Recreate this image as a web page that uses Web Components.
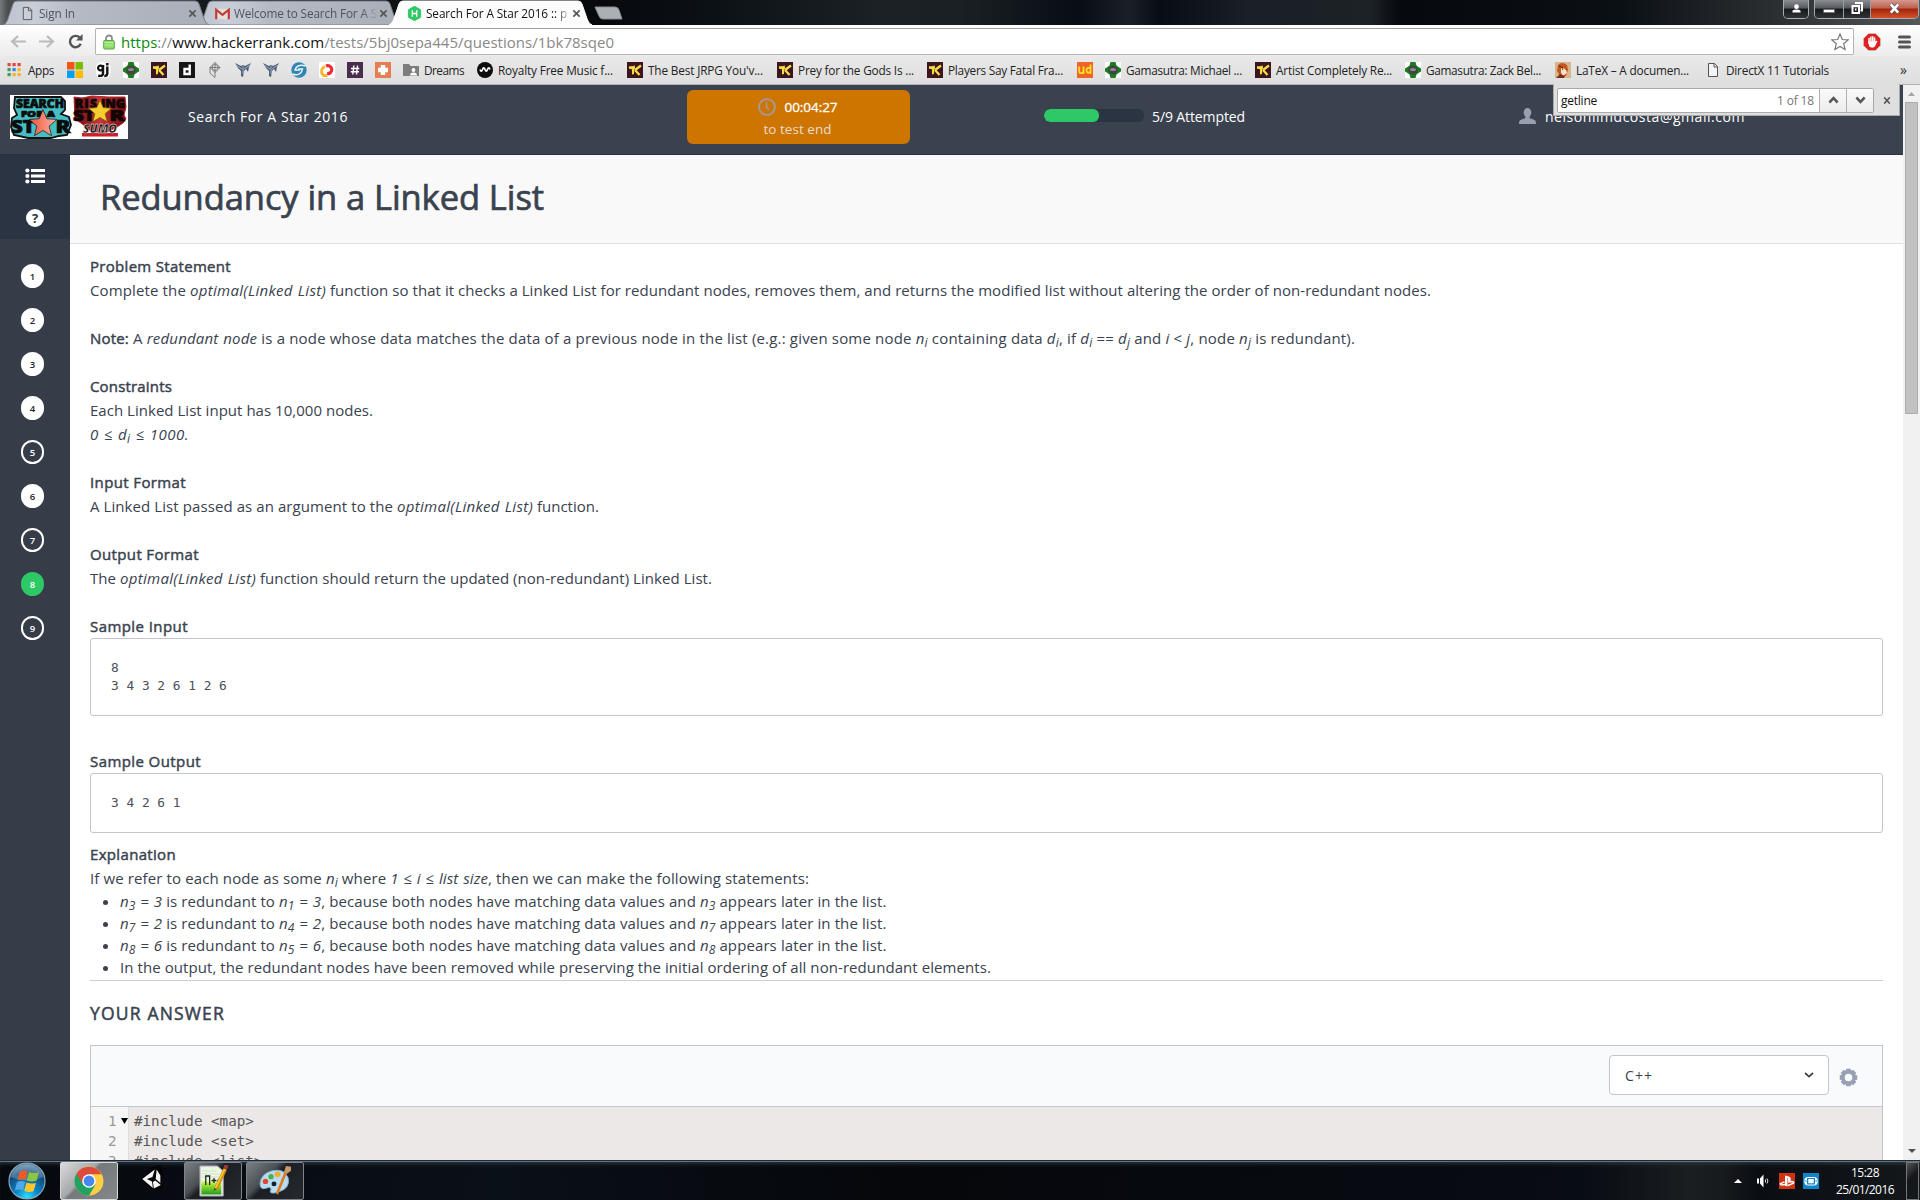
<!DOCTYPE html>
<html lang="en">
<head>
<meta charset="utf-8">
<title>Search For A Star 2016</title>
<style>
html,body{margin:0;height:1200px;overflow:hidden;background:#fff}
body{font-family:"Open Sans","Noto Sans",sans-serif;color:#39424e}
</style>
</head>
<body>
<desktop-screen></desktop-screen>
<script>
const base = '*{box-sizing:border-box}';
function define(name, css, html, after) {
  customElements.define(name, class extends HTMLElement {
    constructor() {
      super();
      const r = this.attachShadow({mode: 'open'});
      r.innerHTML = '<style>' + base + css + '</style>' + (typeof html === 'function' ? html(this) : html);
      if (after) after(this, r);
    }
  });
}
const t = (w, s) => `<fit-text w="${w}">${s}</fit-text>`;

const star = (c, r) => { let p = ''; for (let i = 0; i < 10; i++) { const a = -Math.PI / 2 + i * Math.PI / 5, q = i % 2 ? r * .45 : r; p += (c[0] + q * Math.cos(a)).toFixed(1) + ',' + (c[1] + q * Math.sin(a)).toFixed(1) + ' '; } return p; };

const icons = {
  page: ['0 0 16 16', '<path d="M3.5 1.5h6l3 3v10h-9z" fill="#f4f4f4" stroke="#555"/><path d="M9 1.5v3.5h3.5" fill="none" stroke="#555"/>'],
  pagetab: ['0 0 16 16', '<path d="M3.5 1.5h6l3 3v10h-9z" fill="#c9ced8" stroke="#555"/><path d="M9 1.5v3.5h3.5" fill="none" stroke="#555"/>'],
  gmail: ['0 0 16 16', '<path d="M1.500 3h13v11h-13z" fill="#e0e0e0"/><path d="M1.300 14V4L8 9.500 14.700 4v10" fill="none" stroke="#c33a2e" stroke-width="2.300"/>'],
  hr: ['0 0 16 16', '<path d="M8 .3l6.500 3.700v8L8 15.700 1.500 12V4z" fill="#2ec866" stroke="#2ec866"/><path d="M5.700 4.500v7M10.300 4.500v7M5.700 8h4.600" stroke="#fff" stroke-width="1.500"/>'],
  x: ['0 0 10 10', '<path d="M1.500 1.500l7 7M8.500 1.500l-7 7" stroke="#555" stroke-width="1.800"/>'],
  back: ['0 0 16 14', '<path d="M8 1L2 7l6 6M2.500 7H16" fill="none" stroke="#bbb" stroke-width="2.200"/>'],
  fwd: ['0 0 16 14', '<path d="M8 1l6 6-6 6M13.500 7H0" fill="none" stroke="#bbb" stroke-width="2.200"/>'],
  reload: ['0 0 16 16', '<path d="M13 4.500A6 6 0 1 0 13.600 10.500" fill="none" stroke="#555" stroke-width="2.600"/><path d="M15.500 0v7h-7z" fill="#555"/>'],
  lock: ['0 0 12 16', '<path d="M3 7V4.500a3 3 0 0 1 6 0V7" fill="none" stroke="#8d8d8d" stroke-width="1.800"/><rect x=".7" y="6.500" width="10.600" height="8.500" rx="1" fill="#8fdc6b" stroke="#58a83c"/><path d="M1.500 8.500h9M1.500 11h9" stroke="#b9efa0"/>'],
  star: ['0 0 18 18', `<polygon points="${star([9, 9.6], 8.6)}" fill="#fff" stroke="#777" stroke-width="1.200"/>`],
  stop: ['0 0 18 18', '<path d="M5.500.5h7l5 5v7l-5 5h-7l-5-5v-7z" fill="#e01f1f" stroke="#c9c9c9" stroke-width=".7"/><path d="M6 10V5.500M7.900 9V4M9.800 9V3.700M11.600 9V5" stroke="#fff" stroke-width="1.500" stroke-linecap="round"/><path d="M5.300 8.500h7l1.500-1 .5 1-2.200 4.500c-1 2-4.500 2-6 0z" fill="#fff"/>'],
  menu: ['0 0 13 14', '<path d="M1.500 2h10M1.500 7h10M1.500 12h10" stroke="#555" stroke-width="3" stroke-linecap="round"/>'],
  apps: ['0 0 16 16', [[1,1,'#e8453c'],[6,1,'#e8453c'],[11,1,'#e8453c'],[1,6,'#3f9e5a'],[6,6,'#3b83f0'],[11,6,'#f3b42a'],[1,11,'#3f9e5a'],[6,11,'#f3b42a'],[11,11,'#f3b42a']].map(a => `<rect x="${a[0] - .5}" y="${a[1]}" width="3.200" height="3.200" fill="${a[2]}"/>`).join('')],
  ms: ['0 0 16 16', '<path d="M0 0h7.500v7.500H0z" fill="#f65314"/><path d="M8.500 0H16v7.500H8.500z" fill="#7cbb00"/><path d="M0 8.500h7.500V16H0z" fill="#00a1f1"/><path d="M8.500 8.500H16V16H8.500z" fill="#ffbb00"/>'],
  gj: ['0 0 16 16', '<rect x="1" width="14.500" height="16" rx="5" fill="#fafafa"/><circle cx="5.500" cy="6" r="2.400" fill="none" stroke="#111" stroke-width="2.200"/><path d="M8 3v8.500q0 3-4.800 2.200M12.300 4.500v7q0 2.500-3 2.500M12.300 1v2.500" fill="none" stroke="#111" stroke-width="2.400"/>'],
  gama: ['0 0 16 16', '<rect width="16" height="16" fill="#fff"/><path d="M5.500 0h5l1 3.500L13.500 5 16 6.500v3L13.500 11l-2 1.500-1 3.500h-5l-1-3.500-2-1.500L0 9.500v-3L2.500 5l2-1.500z" fill="#1b7c20"/><circle cx="8" cy="8" r="4.600" fill="#444"/><ellipse cx="8" cy="7.500" rx="3" ry="1.600" fill="#8c8c8c"/>'],
  kotaku: ['0 0 16 16', '<rect width="16" height="16" fill="#3b161c"/><path d="M1.500 5.500L6 4.500 7.500 3l-.5 9-2 .5L5 7.500z" fill="#f7dc45"/><path d="M8 8l6-4.500M8 8l4.500 5M2 5.500h6" stroke="#f7dc45" stroke-width="2.300" fill="none"/>'],
  d: ['0 0 16 16', '<rect width="16" height="16" fill="#161616"/><path d="M10.700 2.500v10.700M10.700 7H5.500v5h5.200" fill="none" stroke="#fff" stroke-width="2.400"/>'],
  kite: ['0 0 16 16', '<path d="M8 .5l5 5-5 5-5-5zM8 .5v15M3 5.500h10M5 5.500a3 3 0 0 0 6 0 3 3 0 0 0-6 0M3 5.500V11l5 4.500" fill="none" stroke="#777" stroke-width=".9"/>'],
  wing: ['0 0 16 16', '<path d="M0 1l6 3 2-1 2 1 6-3-2 4-1 5-2-3-2 2-1 6-2-1V9L3 6z" fill="#4d6079"/><path d="M1 3l6 4M15 3L9 7M8 4v8" stroke="#aeb9c7" stroke-width=".9"/>'],
  swirl: ['0 0 16 16', '<circle cx="8" cy="8" r="7.700" fill="#2f86b5"/><path d="M14.500 4C9 2 5 4 4 8h5M1.500 12c5 2 9 0 10-5H7" fill="none" stroke="#e9f3f8" stroke-width="1.400"/>'],
  flame: ['0 0 16 16', '<rect width="16" height="16" rx="1" fill="#fff"/><path d="M7 4a4 4 0 1 1 1 7.500" fill="none" stroke="#ee2b35" stroke-width="3.200"/><path d="M6 4.500C2 6 1.500 11 4.500 13.500h4" fill="none" stroke="#fbb52c" stroke-width="2.800"/>'],
  hash: ['0 0 16 16', '<rect width="16" height="16" fill="#4a2c4d"/><path d="M6.800 3.500l-1 9M10.500 3.500l-1 9M4 6.500h8.300M3.700 9.800H12" stroke="#fff" stroke-width="1.400"/>'],
  plus: ['0 0 16 16', '<rect width="16" height="16" fill="#e57f51"/><path d="M8 3v10M3 8h10" stroke="#fff" stroke-width="4.400"/>'],
  folder: ['0 0 16 16', '<path d="M0 2h6l1.500 2H16v10H0z" fill="#7d7d7d"/><circle cx="10.500" cy="8" r="1.900" fill="#fff"/><path d="M7 13.500q0-3 3.500-3t3.500 3z" fill="#fff"/>'],
  wave: ['0 0 16 16', '<circle cx="8" cy="8" r="8" fill="#0c0c0c"/><path d="M3 7.500q1.200 3.500 2.500 0t2.500 0 2.500 0 2.500 0" fill="none" stroke="#fff" stroke-width="1.700"/>'],
  ud: ['0 0 16 16', '<rect width="16" height="16" fill="#f0642a"/><path d="M2.200 4.500v4.700q0 2 2 2t2.300-2V4.500M6.500 4.500V12M13.500 2.500V12M13.500 6.500q-4-1.700-4 1.700t4 2" fill="none" stroke="#ffe21f" stroke-width="1.800"/>'],
  lion: ['0 0 16 16', '<rect width="16" height="16" fill="#d9b58d"/><path d="M3 3q4-4 9 0l1 5-2 6H5L2 9z" fill="#c4571c"/><path d="M6 6l5 1 1 4-4 3-2-3z" fill="#f4dfc8"/><path d="M1 16l4-4 5 2-1 2z" fill="#802a1a"/><path d="M7 7l1 .5M10.500 7.500l1 0M4 4l4 2" stroke="#5a1f0f"/>'],
  user: ['0 0 18 16', '<path d="M5 4.500a4 4.500 0 0 1 8 0c0 2-1 3.500-1.800 4.200v1.600q4 1 6 2.200.8.500.8 3.500H0q0-3 .8-3.500 2-1.200 6-2.200V8.700C6 8 5 6.500 5 4.500z" fill="#98a0b0"/>'],
  clock: ['0 0 18 18', '<circle cx="9" cy="9" r="7.900" fill="none" stroke="#a39b9a" stroke-width="1.900"/><path d="M8.500 3.500V9l2.500 3" fill="none" stroke="#a39b9a" stroke-width="1.400"/>'],
  list: ['0 0 20 16', '<circle cx="2.400" cy="2.500" r="2.100" fill="#fff"/><circle cx="2.400" cy="8" r="2.100" fill="#fff"/><circle cx="2.400" cy="13.500" r="2.100" fill="#fff"/><path d="M6 2.500h14M6 8h14M6 13.500h14" stroke="#fff" stroke-width="3"/>'],
  gear: ['0 0 20 20', '<g fill="#98a0b3"><path d="M7.600 .8h4.800l.6 4h-6zM7.600 19.200h4.800l.6-4h-6zM.8 7.600v4.800l4 .6v-6zM19.200 7.600v4.800l-4 .6v-6z"/><path d="M7.600 .8h4.800l.6 4h-6zM7.600 19.200h4.800l.6-4h-6zM.8 7.600v4.800l4 .6v-6zM19.200 7.600v4.800l-4 .6v-6z" transform="rotate(45 10 10)"/></g><circle cx="10" cy="10" r="5.900" fill="#f8fafc" stroke="#98a0b3" stroke-width="3.800"/>'],
  chev: ['0 0 10 6', '<path d="M1 1l4 3.600L9 1" fill="none" stroke="#39424e" stroke-width="1.700"/>'],
  up: ['0 0 12 8', '<path d="M1.500 6.500L6 2l4.500 4.500" fill="none" stroke="#555" stroke-width="2.600"/>'],
  down: ['0 0 12 8', '<path d="M1.500 1.500L6 6l4.500-4.500" fill="none" stroke="#555" stroke-width="2.600"/>'],
  person: ['0 0 10 10', '<circle cx="5" cy="3" r="2.600" fill="#fff"/><path d="M.5 9.500V7.500q1-1.500 4.500-1.500t4.500 1.500v2z" fill="#fff"/>'],
  min: ['0 0 12 12', '<rect x=".5" y="7" width="11" height="3.500" fill="#fff" stroke="#555" stroke-width=".6"/>'],
  rest: ['0 0 12 12', '<path d="M4 1h7v7.500H9.500M1.500 4h6.500v7H1.500z" fill="none" stroke="#fff" stroke-width="2"/><path d="M4 6.500h1.500v2H4z" fill="#fff"/>'],
  wx: ['0 0 12 12', '<path d="M2 1.500l8 9M10 1.500l-8 9" stroke="#556" stroke-width="4.200"/><path d="M2 1.500l8 9M10 1.500l-8 9" stroke="#fff" stroke-width="2.800"/>'],
  orb: ['0 0 38 38', '<defs><radialGradient id="o" cx=".5" cy=".95" r=".9"><stop offset="0" stop-color="#2fe0ff"/><stop offset=".35" stop-color="#0a86c8"/><stop offset=".75" stop-color="#124a7c"/><stop offset="1" stop-color="#5b87ab"/></radialGradient></defs><circle cx="19" cy="19" r="18" fill="url(#o)" stroke="#89a7bb" stroke-width="1.200"/><path d="M3 15A16.500 16.500 0 0 1 35 15Q20 22 3 15z" fill="#fff" opacity=".22"/><path d="M11.500 10q4-2.500 8-.5l-2 8.500q-4-1.800-8 .2z" fill="#ee5a24"/><path d="M21 10q4 2 10 .2l-2.500 8.500q-5 1.700-9.500-.3z" fill="#8cc63f"/><path d="M9 20q4-2 8.200 0l-2.200 8.500q-4-2-8.200.2z" fill="#4fa8e8"/><path d="M18.500 20.500q4.500 2 9.500.4l-2.500 8.400q-5 1.700-9.300-.5z" fill="#fdc62f"/>'],
  chrome: ['0 0 30 30', '<circle cx="15" cy="15" r="14.500" fill="#ffce43"/><path d="M2.440 7.750A14.500 14.500 0 0 0 15 29.500L21.500 18.500 15 15z" fill="#1ea362"/><path d="M2.440 7.750A14.500 14.500 0 0 1 27.560 8.300H15v6.700L9 18.500z" fill="#dd4b3e"/><circle cx="15" cy="15" r="6.800" fill="#fff"/><circle cx="15" cy="15" r="5.400" fill="#4688f1"/>'],
  unity: ['0 0 28 28', '<path d="M14 2l9-2 3 9-2 5 2 6-4 6-8-1L3 15l3-4z" fill="#050505"/><path d="M3.500 14L17 4.500l-2.500 7.500-6 2zM3.500 14l11.500 9-1-6.500-5.500-2.500zM19 4.500l4 6v7.500l-5-4zM23.500 20l-7.500 3.500-1-6.500 2.500-1.500z" fill="#f4f4f4"/>'],
  npp: ['0 0 32 32', '<defs><linearGradient id="n" x2="0" y2="1"><stop offset=".45" stop-color="#eef9d9"/><stop offset=".6" stop-color="#a8ea35"/><stop offset="1" stop-color="#1f9d1c"/></linearGradient></defs><path d="M2 1h18l6 5v25H2z" fill="#eee" stroke="#aaa"/><path d="M3.500 3h16l4.500 4v22.500h-20.500z" fill="url(#n)"/><path d="M4 6h15M4 9h18M4 12h18" stroke="#b9d6e8" stroke-width=".8"/><path d="M8 20v-9h4v9M14 15.500h5M16.500 13v5M20 15.500h4M22 13v5" fill="none" stroke="#222" stroke-width="1.300"/><path d="M28 4L18 25" stroke="#d4920f" stroke-width="4"/><path d="M27.500 4L17.700 24" stroke="#f8cb3d" stroke-width="1.500"/><path d="M29.500 0l-1.500 4" stroke="#a13a3a" stroke-width="4"/><path d="M16 26l1-3 2.500 1z" fill="#444"/>'],
  paint: ['0 0 32 32', '<path d="M13 6q12-3 16 7 3 11-10 15-10 3-7-3 0-3-5-1-6 2-6-5Q2 9 13 6z" fill="#b9dcf0" stroke="#7fb0cf"/><circle cx="12" cy="12" r="2.700" fill="#49b04a"/><circle cx="18.500" cy="9.500" r="2.900" fill="#f4a935"/><circle cx="6.500" cy="17" r="2.700" fill="#e5452c"/><circle cx="15" cy="19.500" r="2.500" fill="#123"/><path d="M27 7l-9 23" stroke="#e07a22" stroke-width="2.600"/><path d="M25 7l2-6 6 1-1 4-4 3z" fill="#c99a68"/>'],
  speaker: ['0 0 14 14', '<path d="M0 4.500h2v5H0zM3 4.500L6.500.5v13L3 9.500z" fill="#fff"/><path d="M8.500 5.500v3M10 4.500q1.800 2.500 0 5" fill="none" stroke="#ddd" stroke-width="1"/>'],
  ps: ['0 0 16 16', '<rect width="16" height="16" fill="#cf3311"/><path d="M6 2.500l3 .8q3 .9 2.800 3.600-.3 2-2.800 1V5L8.500 5v8.500L6 12.700z" fill="#fff"/><path d="M5.500 8.800L1.500 10.500q-1 1 1.500 1.500l3-.5M9 9l4-.5q3 .6 1 2L9 12.500" fill="none" stroke="#fff" stroke-width="1.400"/>'],
  blue: ['0 0 16 16', '<rect width="16" height="16" fill="#0f86cc"/><rect x="1.300" y="4" width="13.400" height="8.500" rx="4" fill="#fff"/><rect x="4" y="5" width="8" height="6.500" fill="#0f86cc"/><rect x="5.300" y="6" width="5.400" height="4.300" fill="#fff"/><circle cx="2.900" cy="8" r=".8" fill="#0f86cc"/><circle cx="13.100" cy="8" r=".8" fill="#0f86cc"/>'],
  tri: ['0 0 8 4', '<path d="M0 4l4-4 4 4z" fill="currentColor"/>'],
  trid: ['0 0 8 4', '<path d="M0 0l4 4 4-4z" fill="currentColor"/>']
};
define('ui-icon', ':host{display:block;flex:none;line-height:0}svg{display:block;width:100%;height:100%}', '', (el, r) => {
  const i = icons[el.getAttribute('name')], w = el.getAttribute('w') || 16, h = el.getAttribute('h') || w;
  r.innerHTML += `<div style="width:${w}px;height:${h}px"><svg viewBox="${i[0]}" preserveAspectRatio="none">${i[1]}</svg></div>`;
});
const ic = (n, w, h, s) => `<ui-icon name="${n}" w="${w || 16}" h="${h || w || 16}" style="${s || ''}"></ui-icon>`;

define('browser-tab', `:host{display:block;position:relative;flex:none;height:25px;font-size:11.800px;color:#505459}
.bg{position:absolute;left:0;top:0;width:100%;height:25px}
.in{position:relative;display:flex;align-items:center;height:25px;padding:1px 12px 0 17px}
.tx{flex:1;overflow:hidden;white-space:nowrap;margin-left:4px;-webkit-mask-image:linear-gradient(90deg,#000 88%,transparent)}
:host([active]){color:#111}:host([active]) .in{padding:1px 11px 0 18px}`,
el => { const w = +el.getAttribute('w'), a = el.hasAttribute('active');
  return `<svg class="bg" viewBox="0 0 ${w} 25" style="width:${w}px"><defs><linearGradient id="t" x2="1"><stop offset="0" stop-color="#bcc2cd"/><stop offset=".15" stop-color="#c9ced8"/><stop offset=".35" stop-color="#b5bac4"/><stop offset="1" stop-color="#a9afb8"/></linearGradient></defs><path d="M0 25Q3 24 4.500 20L10 4Q11 1 14 1H${w - 14}Q${w - 11} 1 ${w - 10} 4L${w - 4.500} 20Q${w - 3} 24 ${w} 25z" fill="${a ? '#fcfcfc' : 'url(#t)'}" stroke="${a ? '#fff' : '#777d86'}" stroke-width="1"/></svg>
  <div class="in" style="width:${w}px">${ic(el.getAttribute('icon'), 15, 15)}<div class="tx"><slot></slot></div>${ic('x', 9, 9)}</div>`; });

define('window-controls', `:host{display:flex;align-items:flex-start;height:19px;gap:5px}
div{display:flex}
span{display:flex;align-items:center;justify-content:center;height:18px;padding-bottom:2px;border-right:1px solid #9a9da0;background:linear-gradient(#8a8d91,#55585c 45%,#16191c 50%,#303337)}
div{border:1px solid #a9acaf;border-top:0;border-radius:0 0 5px 5px;overflow:hidden}
span:last-child{border-right:0}
.c{background:linear-gradient(#d49a90,#bf5f4c 45%,#a2240b 50%,#d2532a)}`,
`<div><span style="width:24px">${ic('person', 9, 9)}</span></div>
<div><span style="width:29px">${ic('min', 12, 11)}</span><span style="width:27px">${ic('rest', 12, 12)}</span><span class="c" style="width:47px">${ic('wx', 11, 11)}</span></div>`);

define('tab-strip', `:host{display:flex;height:25px;background:linear-gradient(90deg,#777a7c 0,#4a4d50 8px,#16191c 205px,#07090d 600px,#0b1014 700px,#1c2125 880px,#1b2024 960px,#080d15 1080px,#1a1f28 1130px,#080c14 1160px,#1a1f28 1250px,#1d2226 1370px,#06090e 1400px,#0b1015 1620px,#2c3033 1780px,#55595b 1920px)}
browser-tab+browser-tab{margin-left:-11px}
.n{width:29px;height:14px;margin:6px 0 0 2px}.f{flex:1}window-controls{margin-right:1px}`,
`<browser-tab w="206" icon="pagetab" style="margin-left:3px;width:206px;z-index:1">${t(36, 'Sign In')}</browser-tab>
<browser-tab w="202" icon="gmail" style="width:202px">${t(143, 'Welcome to Search For A S')}</browser-tab>
<browser-tab w="203" icon="hr" active style="width:203px;z-index:2">${t(141, 'Search For A Star 2016 :: p')}</browser-tab>
<svg class="n" viewBox="0 0 29 14"><path d="M1 1H21Q24 1 25 4L28 13H9Q6 13 5 10z" fill="#abb0b5" stroke="#868b90"/></svg>
<div class="f"></div><window-controls></window-controls>`);

define('nav-bar', `:host{display:flex;align-items:center;height:31px;padding:2px 0 0 10px;background:linear-gradient(#fff,#ececec)}
.o{flex:none;display:flex;align-items:center;width:1759px;height:27px;margin-left:12px;padding:0 4px 0 7px;background:#fff;border:1px solid #b4b4b4;border-top-color:#a0a0a0;border-radius:2px;font-size:15px;color:#888}
.u{flex:1;margin-left:6px}.g{color:#0b8a0b}.k{color:#111}`,
`${ic('back', 16, 13)}${ic('fwd', 16, 13, 'margin-left:13px')}${ic('reload', 15, 15, 'margin-left:13px')}
<div class="o">${ic('lock', 12, 16)}<div class="u">${t(493, '<span class="g">https</span>://<span class="k">www.hackerrank.com</span>/tests/5bj0sepa445/questions/1bk78sqe0')}</div>${ic('star', 18, 18)}</div>
${ic('stop', 18, 18, 'margin-left:9px')}${ic('menu', 13, 14, 'margin-left:17px')}`);

define('bookmark-item', ':host{display:flex;align-items:center;flex:none;gap:5px;font-size:11.800px;color:#222;height:28px}', el => ic(el.getAttribute('icon'), 16, 16) + '<slot></slot>');
const marks = [[7, 'apps', 'Apps', 26], [67, 'ms'], [95, 'gj'], [123, 'gama'], [151, 'kotaku'], [179, 'd'], [207, 'kite'], [235, 'wing'], [263, 'wing'], [291, 'swirl'], [319, 'flame'], [347, 'hash'], [375, 'plus'], [403, 'folder', 'Dreams', 40], [477, 'wave', 'Royalty Free Music f...', 115], [627, 'kotaku', "The Best JRPG You'v...", 115], [777, 'kotaku', 'Prey for the Gods Is ...', 116], [927, 'kotaku', 'Players Say Fatal Fra...', 115], [1077, 'ud'], [1105, 'gama', 'Gamasutra: Michael ...', 116], [1255, 'kotaku', 'Artist Completely Re...', 116], [1405, 'gama', 'Gamasutra: Zack Bel...', 115], [1555, 'lion', 'LaTeX – A documen...', 113], [1705, 'page', 'DirectX 11 Tutorials', 103], [1900]];
define('bookmarks-bar', ':host{display:flex;height:29px;padding-left:7px;background:linear-gradient(#e9e9e9,#dedede);border-bottom:1px solid #b3b3b3}.m{font-size:14px;line-height:27px;color:#333}',
  marks.slice(0, -1).map((m, i) => `<bookmark-item icon="${m[1]}" style="width:${marks[i + 1][0] - m[0]}px">${m[2] ? t(m[3], m[2]) : ''}</bookmark-item>`).join('') + '<div class="m">»</div>');

define('find-bar', `:host{display:flex;align-items:center;position:absolute;left:1553px;top:84px;width:347px;height:32px;padding:1px 8px 0 3px;background:#dfdfdf;border:1px solid #aaa;border-top:0;z-index:5;font-size:12px;color:#111}
.b{display:flex;width:318px;height:25px;border:1px solid #a9a9a9;border-radius:2px;background:#fff;align-items:center;padding-left:3px;margin-right:9px}
.f{flex:1}.n{color:#777;margin-right:5px}
.s{display:flex;align-items:center;justify-content:center;width:27px;height:23px;border-left:1px solid #b0b0b0;background:linear-gradient(#fafafa,#ececec)}`,
`<div class="b"><div class="f">${t(36, 'getline')}</div><div class="n">${t(37, '1 of 18')}</div><div class="s">${ic('up', 11, 8)}</div><div class="s">${ic('down', 11, 8)}</div></div>${ic('x', 8, 9)}`);

define('brand-logo', ':host{display:block;width:118px;height:44px;background:#fff}svg{display:block}text{font-family:"Open Sans",sans-serif;font-weight:800;text-anchor:middle}',
`<svg width="118" height="44" viewBox="0 0 118 44"><defs><linearGradient id="r"><stop offset="0" stop-color="#f0503c"/><stop offset="1" stop-color="#f9b3a3"/></linearGradient><linearGradient id="d" x2="1"><stop offset="0" stop-color="#5a0a0e"/><stop offset=".5" stop-color="#c8353a"/><stop offset="1" stop-color="#6a0c12"/></linearGradient></defs>
<path d="M5 2l46 0 4 4v9l-4 4 8 3 2 8-4 10-8 1-8 2H18L4 40 1 32l1-9 5-3-3-7z" fill="#45bfc4" stroke="#111" stroke-width="1.800"/>
<g stroke="#0c0c0c" stroke-width=".7" fill="#0c0c0c"><text x="30" y="12.500" font-size="11.500" textLength="48" lengthAdjust="spacingAndGlyphs">SEARCH</text><text x="28" y="21.500" font-size="8.500" textLength="34" lengthAdjust="spacingAndGlyphs">FOR A</text><text x="13" y="37.500" font-size="18" textLength="24" lengthAdjust="spacingAndGlyphs">ST</text><text x="53" y="37.500" font-size="18" textLength="15" lengthAdjust="spacingAndGlyphs">R</text></g>
<polygon points="${star([33, 29], 14.5)}" fill="url(#r)" stroke="#111" stroke-width=".7"/>
<path d="M64 2l8 1 10-2 16 1 17 0 1 10-2 8 2 4-3 4-6 4-12 6-14-2-10-8-6-4z" fill="url(#d)" stroke="#b32226"/>
<g fill="#120505" stroke="#120505" stroke-width=".7"><text x="76" y="12.500" font-size="12" textLength="22">RIS</text><text x="103" y="12.500" font-size="12" textLength="24" lengthAdjust="spacingAndGlyphs">ING</text><text x="74" y="26" font-size="16" textLength="22" lengthAdjust="spacingAndGlyphs">ST</text><text x="107" y="26" font-size="16" textLength="15" lengthAdjust="spacingAndGlyphs">R</text></g>
<polygon points="${star([90, 17], 12)}" fill="#f4cf2f" stroke="#7a5b00" stroke-width=".7"/>
<rect x="72" y="38" width="36" height="3.500" fill="#c9202c"/><text x="90" y="37.500" font-size="12" font-style="italic" fill="#111" stroke="#fff" stroke-width=".4" textLength="34" lengthAdjust="spacingAndGlyphs">SUMO</text></svg>`);

define('app-header', `:host{display:flex;flex:none;height:70px;padding-left:10px;background:#3b424f;border-bottom:1px solid #2b323f;color:#fff;font-size:14px}
brand-logo{margin:10px 60px 0 0}.l{height:62px;display:flex;align-items:center}
.t{width:223px;height:54px;margin:5px 134px 0 0;border-radius:6px;background:#ce7500;display:flex;flex-direction:column;align-items:center;font-size:13.500px}
.t div{display:flex;align-items:center;height:22px;gap:9px;margin:6px 2px 0 0;-webkit-text-stroke:.3px}.t div+div{margin-top:0;color:#e9dccb;-webkit-text-stroke:0}
.p{width:100px;height:13px;margin:24px 8px 0 0;border-radius:6px;background:#2b3443;overflow:hidden}.p i{display:block;width:55px;height:13px;border-radius:6px;background:#2ec866}`,
`<brand-logo></brand-logo><div class="l" style="width:499px">${t(160, 'Search For A Star 2016')}</div>
<div class="t"><div>${ic('clock', 18, 18)}${t(53, '00:04:27')}</div><div>${t(68, 'to test end')}</div></div>
<div class="p"><i></i></div><div class="l" style="width:367px">${t(93, '5/9 Attempted')}</div>
<div class="l">${ic('user', 17, 16, 'margin-right:9px')}${t(200, 'nelsonlimdcosta@gmail.com')}</div>`);

define('question-dot', `:host{display:flex;align-items:center;justify-content:center;width:23px;height:24px;border-radius:12px;background:#fff;border:2px solid #fff;color:#222;font-size:9.500px;font-weight:600}
:host([open]){background:transparent;color:#fff}:host([current]){background:#2ec866;border-color:#2ec866;color:#fff}`, '<slot></slot>');
define('side-nav', `:host{display:flex;flex:none;flex-direction:column;width:70px;background:#363c48}
.t{height:84px;background:#2b3443;display:flex;flex-direction:column;align-items:center;padding-top:13px;gap:25px}
.h{width:18px;height:18px;border-radius:9px;background:#fff;color:#2b3443;font-weight:700;font-size:13px;line-height:18px;text-align:center}
.d{display:flex;flex-direction:column;gap:20px;margin:25px 0 0 21px}`,
`<div class="t">${ic('list', 20, 16)}<div class="h">?</div></div><div class="d">${[1, 2, 3, 4, 5, 6, 7, 8, 9].map(n => `<question-dot ${[5, 7, 9].includes(n) ? 'open' : n === 8 ? 'current' : ''}>${n}</question-dot>`).join('')}</div>`);

define('sample-box', ':host{display:block;border:1px solid #c0c5cf;border-radius:3px;background:#fff}pre{margin:0;padding:20px;font:12.840px/18px "DejaVu Sans Mono",monospace;color:#4a4f58}', '<pre><slot></slot></pre>');

const fn = t(136, '<i>optimal(Linked List)</i>');
const li = (a, v, b) => `<li>${t(766.5, `<i>n<sub>${a}</sub> = ${v}</i> is redundant to <i>n<sub>${b}</sub> = ${v}</i>, because both nodes have matching data values and <i>n<sub>${a}</sub></i> appears later in the list.`)}</li>`;
define('problem-statement', `:host{display:block;padding:10px 20px 0;font-size:15px;line-height:24px;color:#39424e}
b{font-weight:400;-webkit-text-stroke:.45px}p{margin:0;height:24px;white-space:nowrap}.g{margin-bottom:24px}
i{word-spacing:.8px}sub{font-size:.8em;line-height:0;vertical-align:-.25em}
ul{margin:0;padding:0 0 0 30px;line-height:22px;height:91px;border-bottom:1px solid #cfcfcf}li{height:22px}`,
`<p>${t(141, '<b>Problem Statement</b>')}</p><p class="g">${t(100, 'Complete the&nbsp;')}${fn}${t(1105, '&nbsp;function so that it checks a Linked List for redundant nodes, removes them, and returns the modified list without altering the order of non-redundant nodes.')}</p>
<p class="g">${t(1265, '<b>Note:</b> A <i>redundant node</i> is a node whose data matches the data of a previous node in the list (e.g.: given some node <i>n<sub>i</sub></i> containing data <i>d<sub>i</sub></i>, if <i>d<sub>i</sub></i> == <i>d<sub>j</sub></i> and <i>i</i> &lt; <i>j</i>, node <i>n<sub>j</sub></i> is redundant).')}</p>
<p>${t(82, '<b>Constraints</b>')}</p><p>${t(283, 'Each Linked List input has 10,000 nodes.')}</p><p class="g">${t(99, '<i>0 ≤ d<sub>i</sub> ≤ 1000.</i>')}</p>
<p>${t(96, '<b>Input Format</b>')}</p><p class="g">${t(307, 'A Linked List passed as an argument to the&nbsp;')}${fn}${t(66, '&nbsp;function.')}</p>
<p>${t(109, '<b>Output Format</b>')}</p><p class="g">${t(30, 'The&nbsp;')}${fn}${t(456, '&nbsp;function should return the updated (non-redundant) Linked List.')}</p>
<p>${t(98, '<b>Sample Input</b>')}</p><sample-box style="height:78px;margin-bottom:33px">8
3 4 3 2 6 1 2 6</sample-box>
<p>${t(111, '<b>Sample Output</b>')}</p><sample-box style="height:60px;margin-bottom:9px">3 4 2 6 1</sample-box>
<p>${t(86, '<b>Explanation</b>')}</p><p>${t(719, 'If we refer to each node as some <i>n<sub>i</sub></i> where <i>1 ≤ i ≤ list size</i>, then we can make the following statements:')}</p>
<ul>${li(3, 3, 1)}${li(7, 2, 4)}${li(8, 6, 5)}<li>${t(871, 'In the output, the redundant nodes have been removed while preserving the initial ordering of all non-redundant elements.')}</li></ul>`);

define('code-editor', `:host{display:block;margin:0 20px;border:1px solid #c0c5cf;border-bottom:0}
.b{display:flex;height:61px;background:#f8fafc;border-bottom:1px solid #c0c5cf;padding:9px 24px 0 0;justify-content:flex-end}
.s{display:flex;align-items:center;justify-content:space-between;width:220px;height:40px;padding:0 14px 0 15px;border:1px solid #c0c5cf;border-radius:4px;background:#fff;font-size:14px}
.c{display:flex;height:60px;font:14.230px/20px "DejaVu Sans Mono",monospace;background:#ece8e7;color:#555}
.g{width:38px;background:#f6f6f6;border-right:1px solid #ddd;color:#999;padding:4px 0 0 17px}
.g div{display:flex;align-items:center;height:20px;gap:4px}.g ui-icon{color:#000}
pre{margin:0;padding:4px 0 0 5px;font:inherit}`,
`<div class="b"><div class="s">${t(28, 'C++')}${ic('chev', 10, 6)}</div>${ic('gear', 19, 19, 'margin:13px 0 0 10px')}</div>
<div class="c"><div class="g"><div>1${ic('trid', 7, 6)}</div><div>2</div><div>3</div></div><pre>#include &lt;map&gt;
#include &lt;set&gt;
#include &lt;list&gt;</pre></div>`);

define('page-scrollbar', ':host{display:flex;flex:none;flex-direction:column;align-items:center;justify-content:space-between;width:17px;background:#f1f1f1;color:#a3a3a3;padding:7px 0}div{width:13px;height:312px;background:#c1c1c1;border:1px solid #adadad;margin:6px 0 auto}',
  `${ic('tri', 7, 4)}<div></div>${ic('trid', 8, 4, 'color:#505050')}`);

define('task-bar', `:host{display:flex;align-items:center;height:40px;border-top:1px solid #1c2a36;box-shadow:inset 0 1px #66717b,inset 0 5px 5px -3px #35404c;background:linear-gradient(90deg,#06090e,#0a1018 500px,#05070b 900px,#080c13 1580px,#1a1e21 1690px,#171b1e 1720px,#0a0d12 1760px,#14181b);color:#fff;font-size:12px;padding-left:8px}
.b{display:flex;align-items:center;justify-content:center;width:58px;height:38px;border:1px solid #7e8489;border-radius:2px;background:linear-gradient(135deg,#7b8084 0,#4b5054 35%,#1b1f23 45%,#262a2e)}
.a{background:linear-gradient(135deg,#d9dadb,#a6a9ac 40%,#75797c 45%,#85888b);border-color:#d5d7d9}
.f{flex:1}.c{display:flex;flex-direction:column;align-items:center;width:60px;height:38px;line-height:17px;padding-top:2px}
.d{width:13px;height:38px;border:1px solid #73777a;margin:0 1px 0 11px;background:linear-gradient(135deg,#555,#15181b 40%)}`,
`${ic('orb', 38, 38)}<div class="b a" style="margin-left:14px">${ic('chrome', 30, 30)}</div>${ic('unity', 26, 28, 'margin:0 19px 0 21px;transform:translateY(-2px)')}<div class="b">${ic('npp', 31, 32)}</div><div class="b" style="margin-left:4px">${ic('paint', 32, 31)}</div>
<div class="f"></div>${ic('tri', 8, 4)}${ic('speaker', 14, 14, 'margin-left:15px')}${ic('ps', 16, 16, 'margin-left:8px')}${ic('blue', 16, 16, 'margin:0 16px 0 8px')}<div class="c">${t(28, '15:28')}${t(58, '25/01/2016')}</div><div class="d"></div>`);

define('desktop-screen', `:host{display:flex;flex-direction:column;width:1920px;height:1200px;overflow:hidden;position:relative}
.v{display:flex;height:1075px;overflow:hidden;flex:none}.p{display:flex;flex-direction:column;width:1903px}
.m{display:flex;flex:1;min-height:0}.c{flex:1;overflow:hidden;background:#fff}
h1{margin:0;height:89px;padding:18px 0 0 30px;background:#f9f9f9;border-bottom:1px solid #e0e0e0;font-size:34.500px;line-height:48px;font-weight:400;-webkit-text-stroke:.7px}
h2{margin:0;height:64px;padding:19px 20px 0;font-size:17.500px;line-height:26px;font-weight:400;-webkit-text-stroke:.5px}`,
`<tab-strip></tab-strip><nav-bar></nav-bar><bookmarks-bar></bookmarks-bar>
<div class="v"><div class="p"><app-header></app-header><div class="m"><side-nav></side-nav><div class="c"><h1>${t(444, 'Redundancy in a Linked List')}</h1><problem-statement></problem-statement><h2>${t(135, 'YOUR ANSWER')}</h2><code-editor></code-editor></div></div></div><page-scrollbar></page-scrollbar></div>
<task-bar></task-bar><find-bar></find-bar>`);

/* Spreads its slotted text over the width given in pixels by tuning the letter spacing. */
customElements.define('fit-text', class extends HTMLElement {
  constructor() {
    super();
    this.attachShadow({mode: 'open'}).innerHTML = '<style>:host{display:inline-block;white-space:nowrap}</style><slot></slot>';
  }
  connectedCallback() {
    const w = +this.getAttribute('w'), now = this.getBoundingClientRect().width;
    if (now) this.style.letterSpacing = ((w - now) / this.textContent.length).toFixed(4) + 'px';
  }
});
</script>
</body>
</html>
